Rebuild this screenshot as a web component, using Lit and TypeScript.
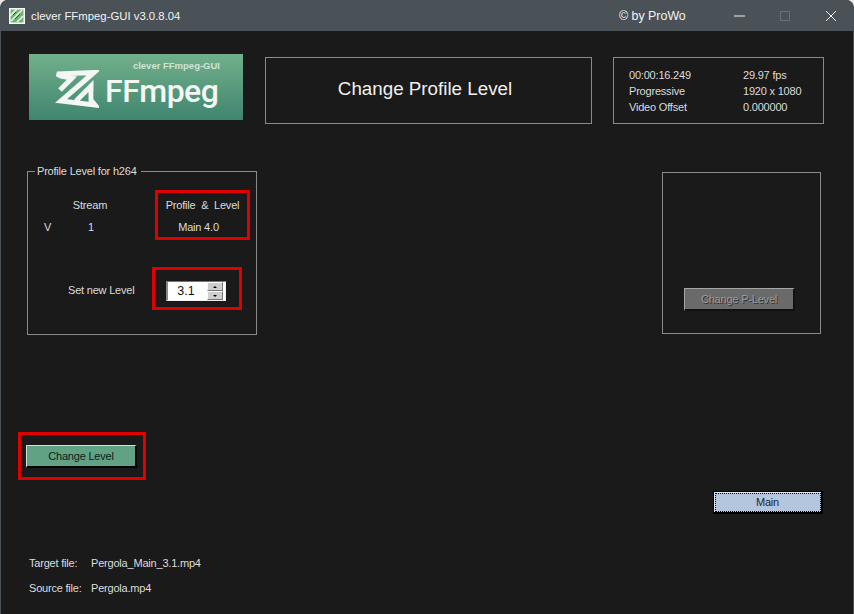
import { LitElement, html, css } from "lit";
import { customElement } from "lit/decorators.js";

@customElement("app-root")
export class AppRoot extends LitElement {
  static styles = css`
    :host { display: block; width: 854px; height: 614px; background: #e8e8e8; overflow: hidden; font-family: "Liberation Sans", Arial, sans-serif; font-size: 11px; letter-spacing: -0.2px; color: #dcdcdc; }
    * { box-sizing: border-box; }
    .win { width: 854px; height: 614px; display: flex; flex-direction: column; background: #1a1a1a; border-radius: 8px 8px 0 0; overflow: hidden; border-left: 1px solid #4a5257; border-right: 1px solid #4a5257; }
    .titlebar { height: 31px; flex: none; background: #4a5257; display: flex; align-items: center; padding-left: 9px; color: #f2f2f2; font-size: 11.35px; letter-spacing: 0; margin: 0 -1px; }
    .appicon { width: 16px; height: 16px; margin-right: 6px; flex: none; }
    .copy { margin-left: auto; width: 98px; font-size: 12.4px; }
    .wbtn { width: 45.5px; height: 31px; display: flex; align-items: center; justify-content: center; flex: none; }
    .wbtns { display: flex; flex: none; width: 137px; }
    .body { flex: 1; display: flex; flex-direction: column; }
    .head { display: flex; margin-top: 23px; padding-left: 28px; align-items: flex-start; height: 69px; }
    .logo { width: 214px; height: 66px; flex: none; background: linear-gradient(#72b08a, #3f8570); display: flex; flex-direction: column; }
    .logo-top { text-align: right; font-size: 9.5px; letter-spacing: 0; font-weight: 700; color: #cfe3d6; padding: 6px 23px 0 0; line-height: 11px; }
    .logo-main { display: flex; align-items: center; padding-left: 24px; margin-top: -1px; }
    .logo-word { font-family: Roboto, sans-serif; font-weight: 500; font-size: 32px; line-height: 30px; color: #f4f7f4; margin: 2px 0 0 6px; letter-spacing: -0.5px; }
    .titlebox { width: 327px; height: 67px; margin: 3px 0 0 22px; border: 1px solid #8a8a8a; display: flex; align-items: center; justify-content: center; font-size: 18.8px; letter-spacing: 0; color: #f0f0f0; padding: 0 7px 3px 0; }
    .info { width: 211px; height: 67px; margin: 3px 0 0 21px; border: 1px solid #8a8a8a; padding: 9px 0 0 15px; display: grid; grid-template-columns: 114px 1fr; grid-auto-rows: 16px; line-height: 16px; }
    .mid { display: flex; padding-left: 26px; margin-top: 41px; align-items: flex-start; }
    fieldset { width: 230px; height: 171px; margin: 0; padding: 12px 6px 0 16px; border: 1px solid #8a8a8a; min-width: 0; }
    legend { padding: 0 4px 0 2px; margin-left: -9px; line-height: 14px; height: 14px; }
    .row1 { display: flex; align-items: flex-start; height: 50px; }
    .cols { display: grid; grid-template-columns: 16px 60px; grid-template-rows: 22px 23px; padding-top: 8px; text-align: center; line-height: 14px; width: 95px; margin-right: 16px; }
    .cols .v { text-align: left; grid-row: 2; grid-column: 1; }
    .cols .st { grid-row: 1; grid-column: 2; }
    .cols .one { grid-row: 2; grid-column: 2; padding-left: 2px; }
    .red { border: 3px solid #e00000; }
    .plbox { width: 95px; height: 50px; text-align: center; line-height: 14px; padding-top: 5px; display: grid; grid-template-rows: 22px 14px; }
    .plmain { padding-right: 8px; }
    .row2 { display: flex; align-items: flex-start; margin-top: 27px; padding-left: 24px; }
    .setl { width: 84px; line-height: 14px; margin-top: 16px; }
    .spinbox { width: 90px; height: 43px; display: flex; align-items: flex-start; justify-content: center; padding: 11px 3px 0 0; }
    .spin { width: 60px; height: 20px; background: #fff; border: 1px solid; border-left-width: 2px; border-color: #777 #eee #eee #8a8a8a; display: flex; color: #111; font-size: 12.5px; letter-spacing: 0; padding-right: 2px; }
    .spinval { flex: 1; text-align: center; line-height: 18px; padding-right: 2px; }
    .arrows { width: 16px; display: flex; flex-direction: column; }
    .arr { flex: 1; background: #cfcfcf; border: 1px solid; border-color: #fafafa #777 #777 #fafafa; display: flex; align-items: center; justify-content: center; }
    .up { width: 0; height: 0; border: 2px solid transparent; border-top: 0; border-bottom: 2px solid #000; }
    .dn { width: 0; height: 0; border: 2px solid transparent; border-bottom: 0; border-top: 2px solid #000; }
    .pbox { width: 159px; height: 162px; margin: 8px 0 0 405px; border: 1px solid #8a8a8a; padding: 115px 0 0 21px; }
    .btn { display: flex; align-items: center; justify-content: center; height: 23px; border: 1px solid; border-right-width: 2px; border-bottom-width: 2px; line-height: 14px; }
    .pbtn { width: 111px; background: #6a6a6a; border-color: #a6a6a6 #111 #111 #a6a6a6; color: #9c9c9c; text-shadow: 1px 1px 0 #333; }
    .redbtn { width: 128px; height: 48px; margin: 97px 0 0 17px; padding: 10px 0 0 5px; flex: none; }
    .green { width: 111px; background: #62a284; border-color: #c9e3d5 #000 #000 #c9e3d5; color: #0f2018; }
    .mainrow { display: flex; justify-content: flex-end; padding-right: 30px; margin-top: 11px; }
    .main { width: 110px; background: #b4c6de; border-color: #000; box-shadow: inset 1px 1px 0 #e0e6f0; color: #1c2432; outline: 1px dotted #000; outline-offset: -3px; }
    .foot { margin-top: 41px; padding-left: 28px; display: grid; grid-template-columns: 62px 1fr; grid-auto-rows: 25px; line-height: 16px; }
  `;

  render() {
    return html`
      <div class="win">
        <div class="titlebar">
          <svg class="appicon" viewBox="0 0 16 16">
            <rect width="16" height="16" fill="#fff"/>
            <rect x="1.5" y="1.5" width="13" height="13" fill="#6cb66f"/>
            <path d="M1 8 8 1M2 13 13 2M8 14 14 8" stroke="#eef6ee" stroke-width="1.6" fill="none"/>
            <path d="M4 7 7 4M6 11 11 6" stroke="#1f5a30" stroke-width="1" fill="none"/>
          </svg>
          <span>clever FFmpeg-GUI v3.0.8.04</span>
          <span class="copy">© by ProWo</span>
          <div class="wbtns">
            <div class="wbtn"><svg width="12" height="12" viewBox="0 0 12 12"><path d="M0 6H11" stroke="#f2f2f2" fill="none"/></svg></div>
            <div class="wbtn"><svg width="12" height="12" viewBox="0 0 12 12"><rect x="1.5" y="1.5" width="9" height="9" stroke="#687075" fill="none"/></svg></div>
            <div class="wbtn"><svg width="12" height="12" viewBox="0 0 12 12"><path d="M1 1 11 11M11 1 1 11" stroke="#f2f2f2" fill="none"/></svg></div>
          </div>
        </div>
        <div class="body">
          <div class="head">
            <div class="logo">
              <div class="logo-top">clever FFmpeg-GUI</div>
              <div class="logo-main">
                <svg width="46" height="39" viewBox="0 0 46 39" fill="none" stroke="#f4f8f4" stroke-linejoin="miter">
                  <path d="M40 14 41 33 39 33Z M33 9 26 15 30 9Z" fill="#1f5c48" stroke="none"/>
                  <path d="M7 20 19 8 8 6 4 4 41 2.5 8 31 42 35 38 30V16L23 31" stroke-width="5"/>
                </svg>
                <span class="logo-word">FFmpeg</span>
              </div>
            </div>
            <div class="titlebox">Change Profile Level</div>
            <div class="info">
              <span>00:00:16.249</span><span>29.97 fps</span>
              <span>Progressive</span><span>1920 x 1080</span>
              <span>Video Offset</span><span>0.000000</span>
            </div>
          </div>
          <div class="mid">
            <fieldset>
              <legend>Profile Level for h264</legend>
              <div class="row1">
                <div class="cols">
                  <span class="st">Stream</span>
                  <span class="v">V</span>
                  <span class="one">1</span>
                </div>
                <div class="plbox red"><span>Profile &nbsp;&amp;&nbsp; Level</span><span class="plmain">Main 4.0</span></div>
              </div>
              <div class="row2">
                <span class="setl">Set new Level</span>
                <div class="spinbox red">
                  <div class="spin">
                    <div class="spinval">3.1</div>
                    <div class="arrows">
                      <div class="arr"><i class="up"></i></div>
                      <div class="arr"><i class="dn"></i></div>
                    </div>
                  </div>
                </div>
              </div>
            </fieldset>
            <div class="pbox"><div class="btn pbtn">Change P-Level</div></div>
          </div>
          <div class="redbtn red"><div class="btn green">Change Level</div></div>
          <div class="mainrow"><div class="btn main">Main</div></div>
          <div class="foot">
            <span>Target file:</span><span>Pergola_Main_3.1.mp4</span>
            <span>Source file:</span><span>Pergola.mp4</span>
          </div>
        </div>
      </div>
    `;
  }
}
